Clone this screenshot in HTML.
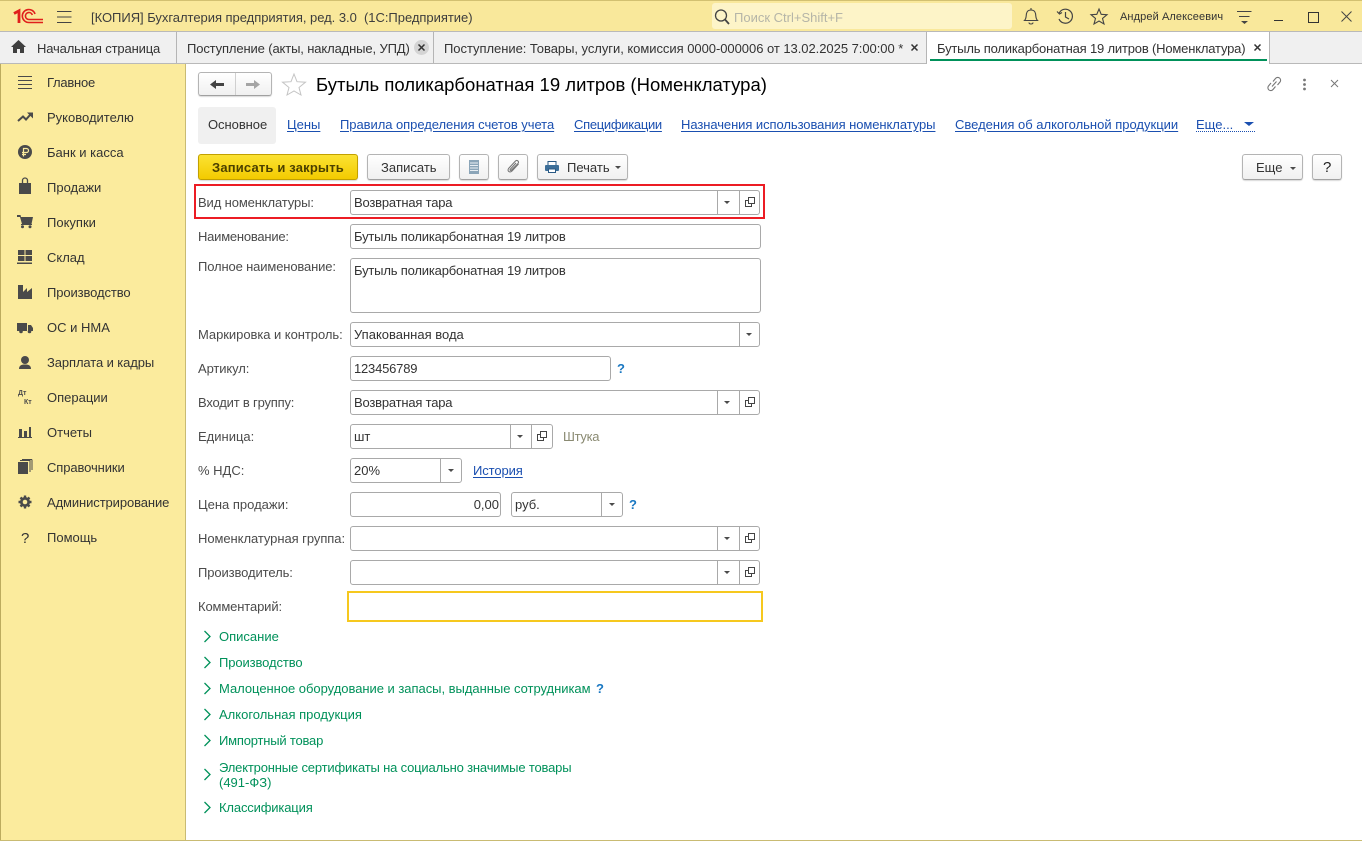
<!DOCTYPE html>
<html lang="ru"><head><meta charset="utf-8"><title>Номенклатура</title>
<style>
html,body{margin:0;padding:0}
body{width:1362px;height:841px;overflow:hidden;position:relative;background:#fff;font:13px "Liberation Sans",Arial,sans-serif;color:#333}
.a{position:absolute}
.t{position:absolute;white-space:nowrap;line-height:14px;margin-top:1px}
.t.n{margin-top:0}
.s{position:absolute;overflow:visible}
.f{position:absolute;box-sizing:border-box;border:1px solid #a9a9a9;border-radius:3px;background:#fff;height:25px}
.f span{position:absolute;left:3px;top:5px;line-height:14px;white-space:nowrap;color:#333}
.f i{position:absolute;top:0;bottom:0;width:1px;background:#a9a9a9}
.f b{position:absolute;top:10px;width:0;height:0;border:3px solid transparent;border-top:3px solid #4b4b4b;border-bottom:0}
.l{color:#4b4b4b}
.m{color:#333}
.g{color:#00915a}
.lk{color:#1a4fb0;text-decoration:underline;text-underline-offset:2px}
.btn{position:absolute;box-sizing:border-box;border:1px solid #b4b4b4;border-bottom-color:#a0a0a0;border-radius:3px;background:linear-gradient(#fff,#f0f0f0);height:26px;box-shadow:0 1px 1px rgba(0,0,0,.15)}
</style></head><body>

<!-- Title bar -->
<div class="a" style="left:0;top:0;width:1362px;height:32px;background:#f9e89b;border-top:1px solid #d2c071;box-sizing:border-box;border-bottom:1px solid #b9b9b9"></div>
<svg class="s" style="left:14px;top:9px" width="30" height="15" viewBox="0 0 30 15" fill="none" stroke="#e0201c" stroke-width="1.600">
<path d="M0 4.500L5 1.800V14" stroke-width="2.800"/>
<path d="M21 5A6.500 6.500 0 1 0 15 13.500H29"/>
<path d="M18.300 6A3.500 3.500 0 1 0 15 10.500H29"/>
</svg>
<svg class="s" style="left:57px;top:10px" width="15" height="13" stroke="#444" stroke-width="1"><path d="M0 1.500H14.500M0 7H14.500M0 12.500H14.500"/></svg>
<div class="t" style="left:91px;top:10px;color:#3d3d3d;letter-spacing:-.03px">[КОПИЯ] Бухгалтерия предприятия, ред. 3.0&nbsp; (1С:Предприятие)</div>
<div class="a" style="left:712px;top:3px;width:300px;height:26px;background:#fdf4c8;border-radius:3px"></div>
<svg class="s" style="left:713px;top:8px" width="18" height="18" fill="none" stroke="#444" stroke-width="1.300"><circle cx="8" cy="7.500" r="5.500"/><path d="M12 11.500L16 16" stroke-width="1.800"/></svg>
<div class="t" style="left:734px;top:10px;color:#b5b5a8">Поиск Ctrl+Shift+F</div>
<svg class="s" style="left:1023px;top:8px" width="16" height="17" fill="none" stroke="#444" stroke-width="1.100"><path d="M1.500 12.500C3.500 10.500 3 8 3.500 5.500C4 3 6 2 8 2C10 2 12 3 12.500 5.500C13 8 12.500 10.500 14.500 12.500Z"/><path d="M8 0V2M6 14.500C6 16.500 10 16.500 10 14.500"/></svg>
<svg class="s" style="left:1057px;top:8px" width="17" height="17" fill="none" stroke="#444" stroke-width="1.200"><path d="M2.200 5A7 7 0 1 1 2 11"/><path d="M0 3.500L2.500 6L5 4.500"/><path d="M8.500 4V9L12 11"/></svg>
<svg class="s" style="left:1090px;top:8px" width="18" height="17" fill="none" stroke="#444" stroke-width="1.100"><path d="M9 1L11.200 6.300L17 6.700L12.500 10.400L14 16L9 13L4 16L5.500 10.400L1 6.700L6.800 6.300Z"/></svg>
<div class="t n" style="left:1120px;top:10px;font-size:11px;color:#333;letter-spacing:.1px">Андрей Алексеевич</div>
<svg class="s" style="left:1237px;top:10px" width="15" height="14" stroke="#444" stroke-width="1"><path d="M0 1.500H14.500M2 6.500H12.500"/><path d="M4 11H11L7.500 14Z" fill="#444" stroke="none"/></svg>
<div class="a" style="left:1274px;top:20px;width:9px;height:1px;background:#333"></div>
<div class="a" style="left:1308px;top:12px;width:9px;height:9px;border:1px solid #333;box-sizing:content-box"></div>
<svg class="s" style="left:1341px;top:11px" width="11" height="11" stroke="#444" stroke-width="1"><path d="M0.500 0.500L10.500 10.500M10.500 0.500L0.500 10.500"/></svg>

<!-- Tabs -->
<div class="a" style="left:0;top:32px;width:1362px;height:32px;background:#f0f0f0;border-bottom:1px solid #b9b9b9;box-sizing:border-box"></div>
<svg class="s" style="left:11px;top:40px" width="15" height="13" fill="#3f3f3f"><path d="M7.500 0L15 7H13V13H9V9H6V13H2V7H0Z"/></svg>
<div class="t" style="left:37px;top:41px;color:#333;letter-spacing:-.15px">Начальная страница</div>
<div class="a" style="left:176px;top:32px;width:1px;height:31px;background:#b5b5b5"></div>
<div class="t" style="left:187px;top:41px;color:#333;letter-spacing:-.13px">Поступление (акты, накладные, УПД)</div>
<div class="a" style="left:414px;top:40px;width:15px;height:15px;border-radius:50%;background:#d4d4d4"></div>
<svg class="s" style="left:418px;top:44px" width="7" height="7" stroke="#333" stroke-width="1.500"><path d="M0.500 0.500L6.500 6.500M6.500 0.500L0.500 6.500"/></svg>
<div class="a" style="left:433px;top:32px;width:1px;height:31px;background:#b5b5b5"></div>
<div class="t" style="left:444px;top:41px;color:#333;letter-spacing:-.04px">Поступление: Товары, услуги, комиссия 0000-000006 от 13.02.2025 7:00:00 *</div>
<svg class="s" style="left:911px;top:44px" width="7" height="7" stroke="#333" stroke-width="1.500"><path d="M0.500 0.500L6.500 6.500M6.500 0.500L0.500 6.500"/></svg>
<div class="a" style="left:926px;top:32px;width:344px;height:32px;background:#fff;border-left:1px solid #b5b5b5;border-right:1px solid #b5b5b5;box-sizing:border-box"></div>
<div class="t" style="left:937px;top:41px;color:#333;letter-spacing:-.18px">Бутыль поликарбонатная 19 литров (Номенклатура)</div>
<svg class="s" style="left:1254px;top:44px" width="7" height="7" stroke="#333" stroke-width="1.500"><path d="M0.500 0.500L6.500 6.500M6.500 0.500L0.500 6.500"/></svg>
<div class="a" style="left:930px;top:59px;width:337px;height:2px;background:#00915a"></div>

<!-- Sidebar -->
<div class="a" style="left:0;top:64px;width:186px;height:777px;background:#fbeb9d;border-left:1px solid #bcab5e;border-right:1px solid #c9bb73;box-sizing:border-box"></div>
<div class="t m" style="left:47px;top:75px;letter-spacing:-.25px">Главное</div>
<div class="t m" style="left:47px;top:110px">Руководителю</div>
<div class="t m" style="left:47px;top:145px">Банк и касса</div>
<div class="t m" style="left:47px;top:180px">Продажи</div>
<div class="t m" style="left:47px;top:215px">Покупки</div>
<div class="t m" style="left:47px;top:250px">Склад</div>
<div class="t m" style="left:47px;top:285px;letter-spacing:-.1px">Производство</div>
<div class="t m" style="left:47px;top:320px">ОС и НМА</div>
<div class="t m" style="left:47px;top:355px;letter-spacing:-.1px">Зарплата и кадры</div>
<div class="t m" style="left:47px;top:390px">Операции</div>
<div class="t m" style="left:47px;top:425px">Отчеты</div>
<div class="t m" style="left:47px;top:460px;letter-spacing:-.1px">Справочники</div>
<div class="t m" style="left:47px;top:495px;letter-spacing:-.1px">Администрирование</div>
<div class="t m" style="left:47px;top:530px">Помощь</div>

<svg class="s" style="left:0;top:64px" width="40" height="490" viewBox="0 0 40 490" fill="#4a4a4a">
<path d="M18 12.500H32M18 16.500H32M18 20.500H32M18 24.500H32" stroke="#4a4a4a" stroke-width="1" fill="none"/>
<path d="M18 57L23 52.500L26 55.500L30 51" fill="none" stroke="#4a4a4a" stroke-width="2"/><path d="M27 48.500H33V54.500Z"/>
<circle cx="25" cy="88" r="7"/><path d="M23.500 92.500V84.500H26.500A2 2 0 0 1 26.500 88.500H22M22 90.500H26" fill="none" stroke="#fbeb9d" stroke-width="1.200"/>
<path d="M19 119H31V130H19Z"/><path d="M22.500 122V116.500A2.500 2.500 0 0 1 27.500 116.500V122" fill="none" stroke="#4a4a4a" stroke-width="1.300"/>
<path d="M17 151H20.500L21 153H33L31.500 160H22L20 153H17Z"/><rect x="21" y="160" width="11" height="1"/><circle cx="22.500" cy="162.800" r="1.500"/><circle cx="30" cy="162.800" r="1.500"/>
<path d="M18 186H24.500V191H18ZM25.500 186H32V191H25.500ZM18 192H24.500V197H18ZM25.500 192H32V197H25.500ZM17 198.500H32V200H17Z"/>
<path d="M18 235V221H23V228L27 224V228L32 224V235Z"/>
<path d="M17 259H27V267H17ZM28 261H31L33 264V267H28Z"/><circle cx="21" cy="267.500" r="1.800"/><circle cx="29.500" cy="267.500" r="1.800"/>
<circle cx="25" cy="296" r="4"/><path d="M19 305C19 301 22 300.500 25 300.500C28 300.500 31 301 31 305Z"/>
<text x="18" y="331" font-family="Liberation Sans,sans-serif" font-size="7" font-weight="bold">Дт</text>
<text x="24" y="340" font-family="Liberation Sans,sans-serif" font-size="7" font-weight="bold">Кт</text>
<path d="M19 365H22V373H19ZM24 367H27V373H24ZM29 363H31V373H29ZM18 373H32V374H18Z"/>
<path d="M18 398H28V410H18Z"/><path d="M30 397V408M32 395.500V406M20 396.500H30.500M22 395.500H32" fill="none" stroke="#4a4a4a"/>
<path d="M25 431.500V444.500M18.500 438H31.500M20.500 433.500L29.500 442.500M29.500 433.500L20.500 442.500" stroke="#4a4a4a" stroke-width="2.400"/><circle cx="25" cy="438" r="5"/><circle cx="25" cy="438" r="2.300" fill="#fbeb9d"/>
<text x="21" y="479" font-family="Liberation Sans,sans-serif" font-size="15" fill="#333">?</text>
</svg>

<!-- Form header -->
<div class="btn" style="left:198px;top:72px;width:74px;height:24px"></div>
<div class="a" style="left:235px;top:73px;width:1px;height:22px;background:#d0d0d0"></div>
<svg class="s" style="left:210px;top:79px" width="15" height="11" fill="#444"><path d="M0 5.500L6 1V4H14V7H6V10Z"/></svg>
<svg class="s" style="left:246px;top:79px" width="15" height="11" fill="#a5a5a5"><path d="M14 5.500L8 1V4H0V7H8V10Z"/></svg>
<svg class="s" style="left:282px;top:73px" width="25" height="23" fill="none" stroke="#c4c4c4" stroke-width="1"><path d="M12 1L15 8.700L23.500 9.200L17 14.500L19 22L12 18L5 22L7 14.500L0.500 9.200L9 8.700Z"/></svg>
<div class="t n" style="left:316px;top:74px;font-size:18.500px;line-height:22px;color:#000">Бутыль поликарбонатная 19 литров (Номенклатура)</div>
<svg class="s" style="left:1266px;top:75px" width="17" height="18" fill="none" stroke="#777" stroke-width="1.100"><path d="M7 6.500L9.500 3.500A2.800 2.800 0 0 1 14 7L11.500 10M9.500 11.500L7 14.500A2.800 2.800 0 0 1 2.500 11L5 8M6 11.500L10.500 6.500"/></svg>
<svg class="s" style="left:1302px;top:78px" width="5" height="13" fill="#777"><circle cx="2.500" cy="2" r="1.400"/><circle cx="2.500" cy="6.500" r="1.400"/><circle cx="2.500" cy="11" r="1.400"/></svg>
<svg class="s" style="left:1330px;top:79px" width="9" height="9" stroke="#777" stroke-width="1"><path d="M1 1L8 8M8 1L1 8"/></svg>

<!-- Form tabs -->
<div class="a" style="left:198px;top:107px;width:78px;height:37px;background:#f0f0f0;border-radius:3px"></div>
<div class="t n" style="left:208px;top:118px;color:#333;letter-spacing:-.05px">Основное</div>
<div class="t n lk" style="left:287px;top:118px">Цены</div>
<div class="t n lk" style="left:340px;top:118px;letter-spacing:-.05px">Правила определения счетов учета</div>
<div class="t n lk" style="left:574px;top:118px;letter-spacing:-.3px">Спецификации</div>
<div class="t n lk" style="left:681px;top:118px;letter-spacing:-.07px">Назначения использования номенклатуры</div>
<div class="t n lk" style="left:955px;top:118px">Сведения об алкогольной продукции</div>
<div class="t n" style="left:1196px;top:118px;color:#1a4fb0;border-bottom:1px dotted #1a4fb0;width:59px;height:13px">Еще...</div>
<div class="a" style="left:1244px;top:122px;width:0;height:0;border:5px solid transparent;border-top:4px solid #1a4fb0;border-bottom:0"></div>

<!-- Command bar -->
<div class="a" style="left:198px;top:154px;width:160px;height:26px;box-sizing:border-box;border:1px solid #c2a000;border-radius:3px;background:linear-gradient(#fbe233,#f3cb00);box-shadow:0 1px 1px rgba(0,0,0,.15)"></div>
<div class="t" style="left:212px;top:160px;font-size:13px;font-weight:bold;color:#4b4000;letter-spacing:.17px">Записать и закрыть</div>
<div class="btn" style="left:367px;top:154px;width:83px"></div>
<div class="t" style="left:381px;top:160px;color:#333">Записать</div>
<div class="btn" style="left:459px;top:154px;width:30px"></div>
<svg class="s" style="left:469px;top:160px" width="10" height="14"><rect width="10" height="14" fill="#8ba5b8"/><path d="M1 3H9M1 5.500H9M1 8H9M1 10.500H9" stroke="#e8eef3" stroke-width="1"/></svg>
<div class="btn" style="left:498px;top:154px;width:30px"></div>
<svg class="s" style="left:506px;top:159px" width="15" height="16" fill="none" stroke="#777" stroke-width="1.100"><path d="M12.500 5L6 12C3.500 14.500 0.500 11.500 3 9L9.500 2C11 0.500 13.500 2.500 12 4.500L5.500 11C4.500 12 3.500 11 4.500 10L10 4"/></svg>
<div class="btn" style="left:537px;top:154px;width:91px"></div>
<svg class="s" style="left:545px;top:161px" width="15" height="12"><rect x="3" y="0.500" width="8" height="4" fill="#fff" stroke="#2a5a85"/><rect x="0" y="4" width="14" height="6" rx="1" fill="#3d6f99"/><rect x="3.500" y="8" width="7" height="3.500" fill="#fff" stroke="#2a5a85"/></svg>
<div class="t" style="left:567px;top:160px;color:#333">Печать</div>
<div class="a" style="left:615px;top:166px;width:0;height:0;border:3px solid transparent;border-top:3px solid #4b4b4b;border-bottom:0"></div>
<div class="btn" style="left:1242px;top:154px;width:61px"></div>
<div class="t" style="left:1256px;top:160px;color:#333">Еще</div>
<div class="a" style="left:1290px;top:167px;width:0;height:0;border:3px solid transparent;border-top:3px solid #4b4b4b;border-bottom:0"></div>
<div class="btn" style="left:1312px;top:154px;width:30px"></div>
<div class="t" style="left:1323px;top:160px;color:#222;font-size:15px">?</div>

<!-- Form -->
<div class="a" style="left:194px;top:184px;width:571px;height:35px;box-sizing:border-box;border:2px solid #ec1c24"></div>

<div class="t l" style="left:198px;top:195px;letter-spacing:-.12px">Вид номенклатуры:</div>
<div class="f" style="left:350px;top:190px;width:410px"><span style="letter-spacing:-.2px">Возвратная тара</span><i style="left:366px"></i><b style="left:373px"></b><i style="left:388px"></i>
<svg class="s" style="left:394px;top:6px" width="10" height="10" fill="none" stroke="#444"><path d="M3.500 0.500H9.500V6.500H3.500ZM3 3.500H0.500V9.500H6.500V7"/></svg></div>

<div class="t l" style="left:198px;top:229px;letter-spacing:-.23px">Наименование:</div>
<div class="f" style="left:350px;top:224px;width:411px"><span style="letter-spacing:-.18px">Бутыль поликарбонатная 19 литров</span></div>

<div class="t l" style="left:198px;top:259px;letter-spacing:-.14px">Полное наименование:</div>
<div class="f" style="left:350px;top:258px;width:411px;height:55px"><span style="letter-spacing:-.18px">Бутыль поликарбонатная 19 литров</span></div>

<div class="t l" style="left:198px;top:327px;letter-spacing:-.05px">Маркировка и контроль:</div>
<div class="f" style="left:350px;top:322px;width:410px"><span>Упакованная вода</span><i style="left:388px"></i><b style="left:395px"></b></div>

<div class="t l" style="left:198px;top:361px;letter-spacing:-.1px">Артикул:</div>
<div class="f" style="left:350px;top:356px;width:261px"><span style="letter-spacing:-.2px">123456789</span></div>
<div class="t" style="left:617px;top:361px;color:#1a78c2;font-weight:bold">?</div>

<div class="t l" style="left:198px;top:395px;letter-spacing:-.19px">Входит в группу:</div>
<div class="f" style="left:350px;top:390px;width:410px"><span style="letter-spacing:-.2px">Возвратная тара</span><i style="left:366px"></i><b style="left:373px"></b><i style="left:388px"></i>
<svg class="s" style="left:394px;top:6px" width="10" height="10" fill="none" stroke="#444"><path d="M3.500 0.500H9.500V6.500H3.500ZM3 3.500H0.500V9.500H6.500V7"/></svg></div>

<div class="t l" style="left:198px;top:429px">Единица:</div>
<div class="f" style="left:350px;top:424px;width:203px"><span>шт</span><i style="left:159px"></i><b style="left:166px"></b><i style="left:180px"></i>
<svg class="s" style="left:186px;top:6px" width="10" height="10" fill="none" stroke="#444"><path d="M3.500 0.500H9.500V6.500H3.500ZM3 3.500H0.500V9.500H6.500V7"/></svg></div>
<div class="t" style="left:563px;top:429px;color:#8a8a72;letter-spacing:-.3px">Штука</div>

<div class="t l" style="left:198px;top:463px">% НДС:</div>
<div class="f" style="left:350px;top:458px;width:112px"><span>20%</span><i style="left:89px"></i><b style="left:97px"></b></div>
<div class="t lk" style="left:473px;top:463px;letter-spacing:-.1px">История</div>

<div class="t l" style="left:198px;top:497px">Цена продажи:</div>
<div class="f" style="left:350px;top:492px;width:151px"><span style="left:auto;right:1px">0,00</span></div>
<div class="f" style="left:511px;top:492px;width:112px"><span>руб.</span><i style="left:89px"></i><b style="left:97px"></b></div>
<div class="t" style="left:629px;top:497px;color:#1a78c2;font-weight:bold">?</div>

<div class="t l" style="left:198px;top:531px;letter-spacing:-.06px">Номенклатурная группа:</div>
<div class="f" style="left:350px;top:526px;width:410px"><i style="left:366px"></i><b style="left:373px"></b><i style="left:388px"></i>
<svg class="s" style="left:394px;top:6px" width="10" height="10" fill="none" stroke="#444"><path d="M3.500 0.500H9.500V6.500H3.500ZM3 3.500H0.500V9.500H6.500V7"/></svg></div>

<div class="t l" style="left:198px;top:565px;letter-spacing:-.1px">Производитель:</div>
<div class="f" style="left:350px;top:560px;width:410px"><i style="left:366px"></i><b style="left:373px"></b><i style="left:388px"></i>
<svg class="s" style="left:394px;top:6px" width="10" height="10" fill="none" stroke="#444"><path d="M3.500 0.500H9.500V6.500H3.500ZM3 3.500H0.500V9.500H6.500V7"/></svg></div>

<div class="t l" style="left:198px;top:599px;letter-spacing:-.13px">Комментарий:</div>
<div class="a" style="left:347px;top:591px;width:416px;height:31px;box-sizing:border-box;border:2px solid #f6c81e"></div>

<!-- Groups -->
<svg class="s" style="left:203px;top:630px" width="10" height="190" fill="none" stroke="#00915a" stroke-width="1.300">
<path d="M1.500 1L7 6.500L1.500 12"/>
<path d="M1.500 27L7 32.500L1.500 38"/>
<path d="M1.500 53L7 58.500L1.500 64"/>
<path d="M1.500 79L7 84.500L1.500 90"/>
<path d="M1.500 105L7 110.500L1.500 116"/>
<path d="M1.500 139L7 144.500L1.500 150"/>
<path d="M1.500 172L7 177.500L1.500 183"/>
</svg>
<div class="t g" style="left:219px;top:629px">Описание</div>
<div class="t g" style="left:219px;top:655px;letter-spacing:-.1px">Производство</div>
<div class="t g" style="left:219px;top:681px;letter-spacing:-.03px">Малоценное оборудование и запасы, выданные сотрудникам</div>
<div class="t" style="left:596px;top:681px;color:#1a78c2;font-weight:bold">?</div>
<div class="t g" style="left:219px;top:707px">Алкогольная продукция</div>
<div class="t g" style="left:219px;top:733px;letter-spacing:-.2px">Импортный товар</div>
<div class="t g" style="left:219px;top:760px;letter-spacing:-.17px">Электронные сертификаты на социально значимые товары</div>
<div class="t g" style="left:219px;top:775px">(491-ФЗ)</div>
<div class="t g" style="left:219px;top:800px;letter-spacing:-.15px">Классификация</div>

<div class="a" style="left:0;top:840px;width:1362px;height:1px;background:#c9bb73"></div>
</body></html>
